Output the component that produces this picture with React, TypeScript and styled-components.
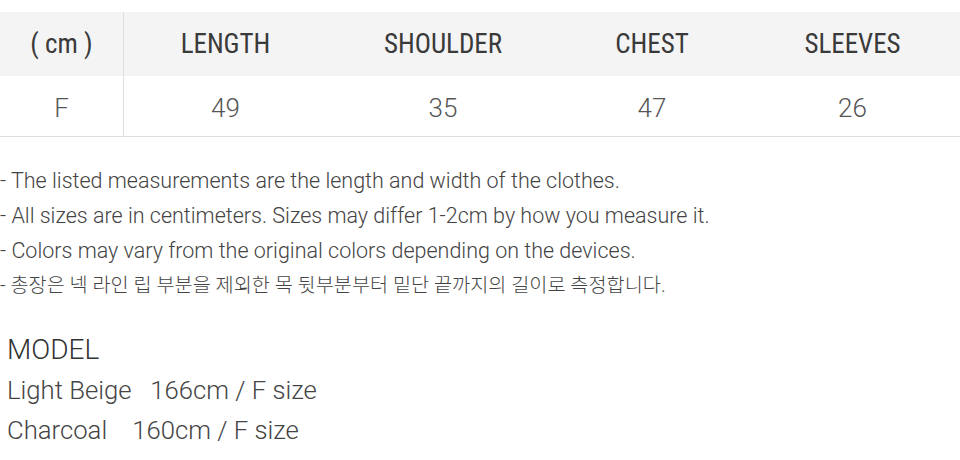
import React from "react";
import styled, { createGlobalStyle } from "styled-components";

const Global = createGlobalStyle`
  html, body { margin: 0; padding: 0; background: #fff; }
  body { font-family: Roboto, "Noto Sans CJK KR", sans-serif; }
`;

const Page = styled.div`
  width: 960px;
  height: 460px;
  overflow: hidden;
  padding-top: 12px;
  box-sizing: border-box;
`;

const Table = styled.div`
  display: grid;
  grid-template-columns: 124px 203px 232px 186px 215px;
  border-bottom: 1px solid #dedede;
`;

const HeadCell = styled.div<{ $first?: boolean }>`
  height: 64px;
  background: #f4f4f4;
  display: flex;
  align-items: center;
  justify-content: center;
  font-family: Roboto, sans-serif;
  font-stretch: condensed;
  font-size: 27px;
  font-weight: 400;
  color: #3a3a3a;
  border-right: ${(p) => (p.$first ? "1px solid #dedede" : "none")};
`;

const BodyCell = styled.div<{ $first?: boolean }>`
  height: 60px;
  padding-top: 3px;
  box-sizing: border-box;
  display: flex;
  align-items: center;
  justify-content: center;
  font-family: "Roboto Light", Roboto, sans-serif;
  font-size: 26px;
  font-weight: 300;
  color: #555;
  border-right: ${(p) => (p.$first ? "1px solid #dedede" : "none")};
`;

const Notes = styled.div`
  margin-top: 26px;
  display: flex;
  flex-direction: column;
`;

const Note = styled.div<{ $kr?: boolean }>`
  height: 35px;
  line-height: 35px;
  font-family: "Roboto Light", Roboto, "Noto Sans CJK KR", sans-serif;
  font-size: ${(p) => (p.$kr ? "19.7px" : "21.5px")};
  font-weight: 300;
  color: #444;
  white-space: nowrap;
`;

const Model = styled.div`
  margin-top: 27px;
  padding-left: 7px;
  display: flex;
  flex-direction: column;
`;

const ModelLine = styled.div<{ $title?: boolean }>`
  height: 40px;
  line-height: 40px;
  font-family: "Roboto Light", Roboto, sans-serif;
  font-size: ${(p) => (p.$title ? "28px" : "25.7px")};
  font-weight: 300;
  color: ${(p) => (p.$title ? "#333" : "#444")};
  white-space: pre;
`;

const heads = ["( cm )", "LENGTH", "SHOULDER", "CHEST", "SLEEVES"];
const values = ["F", "49", "35", "47", "26"];

export default function App() {
  return (
    <Page>
      <Global />
      <Table>
        {heads.map((h, i) => (
          <HeadCell key={h} $first={i === 0}>{h}</HeadCell>
        ))}
        {values.map((v, i) => (
          <BodyCell key={i} $first={i === 0}>{v}</BodyCell>
        ))}
      </Table>
      <Notes>
        <Note>- The listed measurements are the length and width of the clothes.</Note>
        <Note>- All sizes are in centimeters. Sizes may differ 1-2cm by how you measure it.</Note>
        <Note>- Colors may vary from the original colors depending on the devices.</Note>
        <Note $kr>- 총장은 넥 라인 립 부분을 제외한 목 뒷부분부터 밑단 끝까지의 길이로 측정합니다.</Note>
      </Notes>
      <Model>
        <ModelLine $title>MODEL</ModelLine>
        <ModelLine>{"Light Beige   166cm / F size"}</ModelLine>
        <ModelLine>{"Charcoal    160cm / F size"}</ModelLine>
      </Model>
    </Page>
  );
}
